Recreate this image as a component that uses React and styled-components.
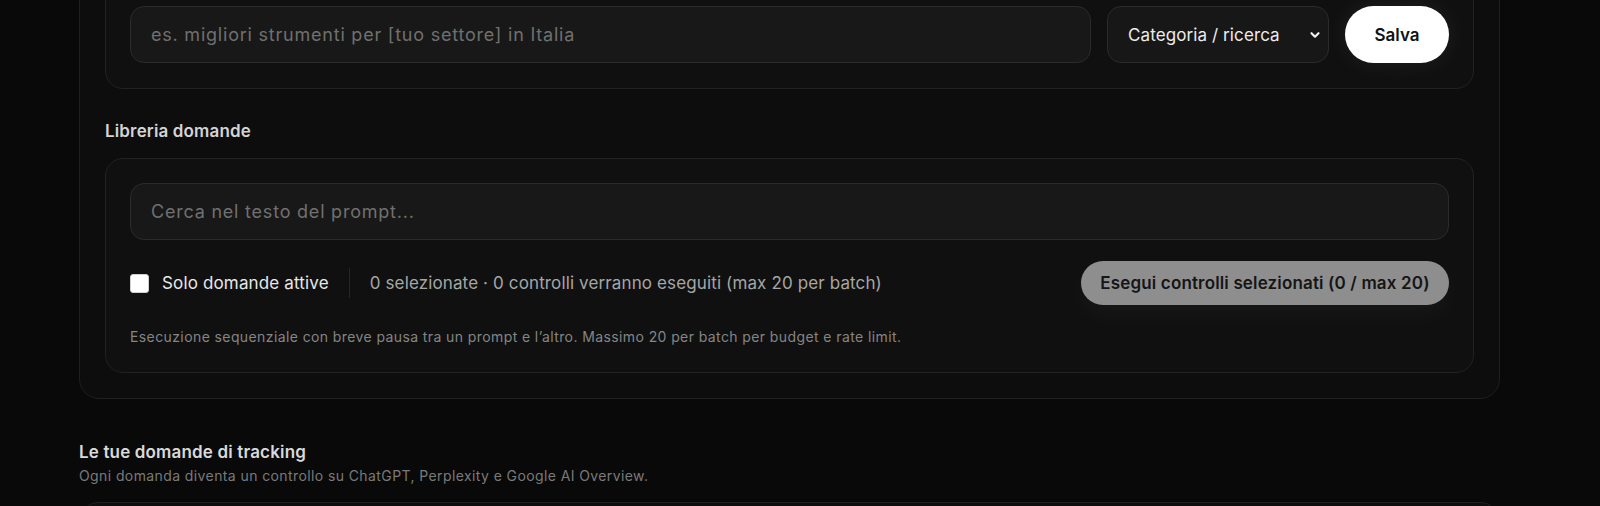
import React from "react";
import styled, { createGlobalStyle } from "styled-components";

const Global = createGlobalStyle`
  html, body { margin: 0; padding: 0; background: #090909; }
  body { font-family: Inter, "Noto Sans", sans-serif; color: #e5e5e5; overflow: hidden; }
  * { box-sizing: border-box; }
`;

const Page = styled.div`
  width: 1600px;
  height: 506px;
  overflow: hidden;
  padding-left: 79px;
`;

const Column = styled.div`
  width: 1421px;
  display: flex;
  flex-direction: column;
`;

const OuterPanel = styled.section`
  margin-top: -44px;
  background: #0d0d0d;
  border: 1px solid #1f1f1f;
  border-radius: 20px;
  padding: 24px 25px 25px 25px;
  display: flex;
  flex-direction: column;
`;

const InnerPanel = styled.div`
  background: #101010;
  border: 1px solid #222222;
  border-radius: 18px;
  padding: 24px 24px 25px 24px;
  display: flex;
  flex-direction: column;
`;

const FormRow = styled.div`
  display: flex;
  align-items: center;
  gap: 16px;
`;

const TextInput = styled.input`
  flex: ${(p) => (p.$grow ? "1 1 auto" : "none")};
  min-width: 0;
  height: 57px;
  background: #181818;
  border: 1px solid #2b2b2b;
  border-radius: 14px;
  padding: 0 20px;
  font-family: Inter, sans-serif;
  font-size: 18px;
  letter-spacing: 0.78px;
  color: #e5e5e5;
  outline: none;
  &::placeholder { color: #707070; }
`;

const SelectWrap = styled.div`
  position: relative;
  width: 222px;
  height: 57px;
  flex: none;
`;

const Select = styled.select`
  appearance: none;
  width: 100%;
  height: 100%;
  background: #171717;
  border: 1px solid #2b2b2b;
  border-radius: 14px;
  padding: 0 20px;
  font-family: Inter, sans-serif;
  font-size: 17px;
  letter-spacing: 0.1px;
  color: #ececec;
  outline: none;
`;

const Chevron = styled.svg`
  position: absolute;
  right: 8px;
  top: 50%;
  margin-top: -6px;
  pointer-events: none;
`;

const PrimaryButton = styled.button`
  flex: none;
  width: 104px;
  height: 57px;
  border: none;
  border-radius: 999px;
  background: #ffffff;
  color: #111111;
  font-family: Inter, sans-serif;
  font-size: 17px;
  font-weight: 600;
  box-shadow: 0 0 24px rgba(255, 255, 255, 0.07);
`;

const SectionLabel = styled.h3`
  margin: 30px 0 15px 0;
  font-size: 17px;
  line-height: 24px;
  font-weight: 600;
  letter-spacing: 0.15px;
  color: #d4d4d4;
`;

const ControlsRow = styled.div`
  margin-top: 21px;
  display: flex;
  align-items: center;
  height: 44px;
`;

const CheckLabel = styled.label`
  display: flex;
  align-items: center;
  gap: 13px;
  font-size: 17px;
  letter-spacing: 0.15px;
  color: #e8e8e8;
`;

const Checkbox = styled.input`
  appearance: none;
  margin: 0;
  width: 19px;
  height: 19px;
  border-radius: 3px;
  background: #ffffff;
  border: 1px solid #d0d0d0;
`;

const Divider = styled.span`
  width: 1px;
  height: 30px;
  background: #262626;
  margin: 0 20px;
`;

const Summary = styled.span`
  font-size: 17px;
  letter-spacing: 0.13px;
  color: #a6a6a6;
`;

const RunButton = styled.button`
  margin-left: auto;
  width: 368px;
  height: 44px;
  border: none;
  border-radius: 999px;
  background: #8e8e8e;
  color: #151515;
  font-family: Inter, sans-serif;
  font-size: 17px;
  font-weight: 600;
  letter-spacing: 0.15px;
  box-shadow: 0 10px 24px rgba(255, 255, 255, 0.035);
`;

const Note = styled.p`
  margin: 22px 0 0 0;
  font-size: 14px;
  line-height: 20px;
  letter-spacing: 0.4px;
  color: #858585;
`;

const SectionHead = styled.div`
  margin-top: 41px;
  display: flex;
  flex-direction: column;
  gap: 2px;
`;

const SectionTitle = styled.h2`
  margin: 0;
  font-size: 17px;
  line-height: 24px;
  font-weight: 600;
  letter-spacing: 0.16px;
  color: #d9d9d9;
`;

const SectionSub = styled.p`
  margin: 0;
  font-size: 14px;
  line-height: 20px;
  letter-spacing: 0.4px;
  color: #7a7a7a;
`;

const ListPanel = styled.div`
  margin-top: 16px;
  height: 120px;
  background: #0e0e0e;
  border: 1px solid #1f1f1f;
  border-radius: 20px;
`;

export default function App() {
  return (
    <>
      <Global />
      <Page>
        <Column>
          <OuterPanel>
            <InnerPanel>
              <FormRow>
                <TextInput $grow placeholder="es. migliori strumenti per [tuo settore] in Italia" />
                <SelectWrap>
                  <Select defaultValue="cat">
                    <option value="cat">Categoria / ricerca</option>
                  </Select>
                  <Chevron width="12" height="12" viewBox="0 0 12 12">
                    <path d="M2.5 4.2 L6 7.7 L9.5 4.2" fill="none" stroke="#f0f0f0" strokeWidth="2.2" strokeLinecap="round" strokeLinejoin="round" />
                  </Chevron>
                </SelectWrap>
                <PrimaryButton>Salva</PrimaryButton>
              </FormRow>
            </InnerPanel>

            <SectionLabel>Libreria domande</SectionLabel>

            <InnerPanel>
              <TextInput placeholder="Cerca nel testo del prompt..." />
              <ControlsRow>
                <CheckLabel>
                  <Checkbox type="checkbox" />
                  Solo domande attive
                </CheckLabel>
                <Divider />
                <Summary>0 selezionate · 0 controlli verranno eseguiti (max 20 per batch)</Summary>
                <RunButton>Esegui controlli selezionati (0 / max 20)</RunButton>
              </ControlsRow>
              <Note>
                Esecuzione sequenziale con breve pausa tra un prompt e l’altro. Massimo 20 per batch per budget e rate limit.
              </Note>
            </InnerPanel>
          </OuterPanel>

          <SectionHead>
            <SectionTitle>Le tue domande di tracking</SectionTitle>
            <SectionSub>Ogni domanda diventa un controllo su ChatGPT, Perplexity e Google AI Overview.</SectionSub>
          </SectionHead>

          <ListPanel />
        </Column>
      </Page>
    </>
  );
}
